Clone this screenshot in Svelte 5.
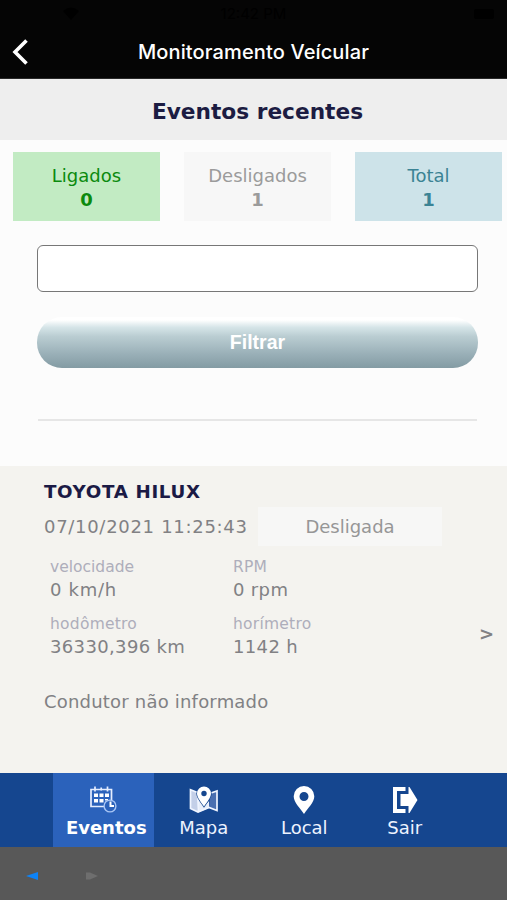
<script lang="ts">
	type Summary = { id: string; label: string; count: number };
	type Reading = { id: string; label: string; value: string };
	type Tab = { id: string; label: string };

	const summaries: Summary[] = [
		{ id: 'on', label: 'Ligados', count: 0 },
		{ id: 'off', label: 'Desligados', count: 1 },
		{ id: 'total', label: 'Total', count: 1 }
	];

	const readings: Reading[] = [
		{ id: 'speed', label: 'velocidade', value: '0 km/h' },
		{ id: 'rpm', label: 'RPM', value: '0 rpm' },
		{ id: 'odometer', label: 'hodômetro', value: '36330,396 km' },
		{ id: 'hours', label: 'horímetro', value: '1142 h' }
	];

	const tabs: Tab[] = [
		{ id: 'eventos', label: 'Eventos' },
		{ id: 'mapa', label: 'Mapa' },
		{ id: 'local', label: 'Local' },
		{ id: 'sair', label: 'Sair' }
	];

	let activeTab = $state('eventos');
	let query = $state('');
</script>

<div class="screen">
	<header class="topbar">
		<div class="status">
			<svg width="18" height="14" viewBox="0 0 18 14" aria-hidden="true">
				<path d="M1 4Q9 -3 17 4L9 13Z" />
			</svg>
			<span>12:42 PM</span>
			<svg width="22" height="10" viewBox="0 0 22 10" aria-hidden="true">
				<rect width="20" height="10" rx="2" />
			</svg>
		</div>
		<div class="topbar__row">
			<button class="back" aria-label="Voltar">
				<svg width="18" height="28" viewBox="0 0 18 28" aria-hidden="true">
					<path d="M15.500 2.500 4 14 15.500 25.500" />
				</svg>
			</button>
			<h1>Monitoramento Veícular</h1>
		</div>
	</header>

	<h2 class="heading">Eventos recentes</h2>

	<section class="summary">
		{#each summaries as item (item.id)}
			<div class="summary__box summary__box--{item.id}">
				<span>{item.label}</span>
				<b>{item.count}</b>
			</div>
		{/each}
	</section>

	<form class="filter">
		<input type="text" aria-label="Filtro" bind:value={query} />
		<button type="button">Filtrar</button>
	</form>

	<article class="vehicle">
		<h3>TOYOTA HILUX</h3>
		<div class="vehicle__state">
			<time>07/10/2021 11:25:43</time>
			<span>Desligada</span>
		</div>
		<div class="vehicle__details">
			<dl>
				{#each readings as reading (reading.id)}
					<div class="reading reading--{reading.id}">
						<dt>{reading.label}</dt>
						<dd>{reading.value}</dd>
					</div>
				{/each}
			</dl>
			<span class="vehicle__more">&gt;</span>
		</div>
		<p class="vehicle__driver">Condutor não informado</p>
	</article>

	<nav class="tabs">
		{#each tabs as tab (tab.id)}
			<button
				class="tab tab--{tab.id}"
				class:tab--active={activeTab === tab.id}
				onclick={() => (activeTab = tab.id)}
			>
				{#if tab.id === 'eventos'}
					<svg width="28" height="28" viewBox="0 0 28 28" aria-hidden="true">
						<path d="M15 20.500H2V3.500h20.500V14" fill="none" stroke="#e4edff" stroke-width="1.700" />
						<path d="M6 .500v5M18.500 .500v5M12.200 1.500v3" stroke="#e4edff" stroke-width="1.700" />
						<path
							d="M5 7.500h4v3.500H5zM10.500 7.500h4v3.500h-4zM16 7.500h4v3.500h-4zM5 13h4v3.500H5zM10.500 13h4v3.500h-4zM16 13h3v1.500h-3z"
							fill="#fff"
						/>
						<circle cx="21" cy="20" r="5.900" fill="#2b62bb" stroke="#a9c6f5" stroke-width="1.400" />
						<path d="M21.500 15.500V20h3.500" fill="none" stroke="#fff" stroke-width="2" />
					</svg>
				{:else if tab.id === 'mapa'}
					<svg width="30" height="28" viewBox="0 0 30 28" aria-hidden="true">
						<path d="M1 3.500 8 6.500V25.500L1 22.500Z" fill="#c3cfe8" />
						<path d="M8 12 15 20 20 15V22L9 26.500Z" fill="#e9effa" />
						<path d="M21 7h2l5-2V24l-8-2Z" fill="#4a6fb0" />
						<path
							d="M8.500 6.500 1.500 3.800V22.500L9 26 20 21.500 28 24.500V5l-6 2M9 8v17"
							fill="none"
							stroke="#f0f5ff"
							stroke-width="1.700"
						/>
						<path
							d="M15 .500a7 7 0 0 0-7 7c0 4 4 8.500 7 13C18 16 22 11.500 22 7.500a7 7 0 0 0-7-7Z"
							fill="#fff"
							stroke="#15468f"
							stroke-width="1.400"
							paint-order="stroke"
						/>
						<circle cx="15" cy="7.500" r="2.700" fill="#15468f" />
					</svg>
				{:else if tab.id === 'local'}
					<svg width="22" height="28" viewBox="0 0 22 28" aria-hidden="true">
						<path
							d="M11 0A10.300 10.300 0 0 0 .700 10.300C.700 16.500 7 22 11 28c4-6 10.300-11.500 10.300-17.700A10.300 10.300 0 0 0 11 0Zm0 6a4.500 4.500 0 1 1 0 9 4.500 4.500 0 0 1 0-9Z"
							fill="#fff"
							fill-rule="evenodd"
						/>
					</svg>
				{:else}
					<svg width="26" height="28" viewBox="0 0 26 28" aria-hidden="true">
						<path d="M13.500 3H3v22h10.500" fill="none" stroke="#fff" stroke-width="4" />
						<path d="M8.500 8h8V1h1L25.500 14 17.500 27h-1v-7h-8Z" fill="#fff" />
					</svg>
				{/if}
				<span>{tab.label}</span>
			</button>
		{/each}
	</nav>

	<footer class="browser">
		<svg width="12" height="8" viewBox="0 0 12 8" aria-hidden="true">
			<path d="M0 4 12 0v8Z" fill="#0d83f7" />
		</svg>
		<svg width="12" height="8" viewBox="0 0 12 8" aria-hidden="true">
			<path d="M0 .500h4L12 4 4 7.500H0Z" fill="#6e6e6e" />
		</svg>
	</footer>
</div>

<style>
	:global(body) {
		margin: 0;
	}

	.screen {
		display: flex;
		flex-direction: column;
		width: 507px;
		height: 900px;
		overflow: hidden;
		background: #fcfcfc;
		color: #818184;
		font-family: 'DejaVu Sans', Verdana, sans-serif;
		font-size: 18px;
		line-height: 24px;
	}

	button {
		padding: 0;
		border: 0;
		background: none;
		color: inherit;
		font: inherit;
	}

	svg {
		display: block;
	}

	h1,
	h2,
	h3,
	p,
	dl,
	dd {
		margin: 0;
	}

	.topbar {
		box-sizing: border-box;
		flex: none;
		height: 79px;
		border-bottom: 1px solid #292929;
		background: #050505;
		color: #fff;
	}

	.status {
		display: grid;
		grid-template-columns: 1fr auto 1fr;
		align-items: center;
		height: 27px;
		padding: 0 11px 0 62px;
		fill: #000;
		color: #000;
		font: 15px/27px Inter, sans-serif;
	}

	.status span {
		margin-left: -51px;
	}

	.status svg:last-child {
		justify-self: end;
	}

	.topbar__row {
		display: grid;
		grid-template-columns: 40px 1fr 40px;
		align-items: center;
		height: 50px;
	}

	.back {
		padding-left: 11px;
	}

	.back path {
		fill: none;
		stroke: #fff;
		stroke-width: 3.6;
	}

	.topbar h1 {
		font: 500 20px/24px Inter, sans-serif;
		letter-spacing: 0.13px;
		text-align: center;
		white-space: nowrap;
	}

	.heading {
		flex: none;
		height: 61px;
		padding-left: 8px;
		background: #eee;
		color: #1c1c42;
		font-size: 21.7px;
		line-height: 65px;
		text-align: center;
	}

	.summary {
		display: grid;
		grid-template-columns: repeat(3, 147px);
		justify-content: space-between;
		padding: 12px 5px 0 13px;
	}

	.summary__box {
		display: flex;
		flex-direction: column;
		box-sizing: border-box;
		height: 69px;
		padding-top: 12px;
		text-align: center;
	}

	.summary__box--on {
		background: #c2ebc3;
		color: #0b8a0e;
	}

	.summary__box--off {
		background: #f7f7f7;
		color: #9b9b9b;
	}

	.summary__box--total {
		background: #cde3e9;
		color: #3b8394;
	}

	.filter {
		display: flex;
		flex: none;
		flex-direction: column;
		height: 177px;
		margin: 24px 29px 0 37px;
	}

	.filter input {
		box-sizing: border-box;
		flex: none;
		width: 441px;
		height: 47px;
		padding: 0 10px;
		border: 1.500px solid #777;
		border-radius: 6px;
		background: #fff;
		font: inherit;
	}

	.filter button {
		flex: none;
		height: 51px;
		margin-top: 25px;
		border-radius: 25px;
		background: linear-gradient(#fff 0 6%, #d6e5e8 20%, #bacdd2 38%, #9ab0b8 72%, #839ba3 100%);
		color: #fff;
		font: bold 19.500px/51px 'Liberation Sans', Arial, sans-serif;
	}

	.filter::after {
		flex: none;
		height: 2px;
		margin: 51px 1px 0;
		background: #e6e6e6;
		content: '';
	}

	.vehicle {
		flex: none;
		box-sizing: border-box;
		height: 307px;
		margin-top: 44px;
		padding: 14px 0 0 44px;
		background: #f4f3ef;
	}

	.vehicle h3 {
		color: #1b1a45;
		font-size: 18.3px;
		letter-spacing: 0.63px;
		line-height: 24px;
	}

	.vehicle__state {
		display: flex;
		align-items: center;
		gap: 11px;
		margin-top: 3px;
	}

	.vehicle__state time {
		width: 203px;
		letter-spacing: 0.7px;
		white-space: nowrap;
	}

	.vehicle__state span {
		width: 184px;
		height: 39px;
		background: #f7f7f6;
		color: #969696;
		line-height: 40px;
		text-align: center;
	}

	.vehicle__details {
		display: grid;
		grid-template-columns: 429px 1fr;
		padding-left: 6px;
		margin-top: 10px;
	}

	.vehicle dl {
		display: grid;
		grid-template-columns: 183px 1fr;
		row-gap: 12px;
	}

	.reading dt {
		color: #aeaebb;
		font-size: 15.500px;
		letter-spacing: 0.25px;
		line-height: 22px;
	}

	.reading--speed dt {
		letter-spacing: 0;
	}

	.reading dd {
		letter-spacing: 0.35px;
		line-height: 23px;
	}

	.reading--speed dd {
		letter-spacing: 0.7px;
	}

	.vehicle__more {
		margin-top: 66px;
		font-size: 18px;
		font-weight: bold;
		line-height: 23px;
	}

	.vehicle__driver {
		margin-top: 32px;
		letter-spacing: 0.2px;
	}

	.tabs {
		display: grid;
		flex: none;
		grid-template-columns: repeat(4, 100.500px);
		height: 74px;
		padding-left: 53px;
		background: #15468f;
		color: #edf3ff;
	}

	.tab {
		display: flex;
		flex-direction: column;
		align-items: center;
		padding-top: 13px;
	}

	.tab span {
		font-size: 18px;
		line-height: 28px;
	}

	.tab--active {
		background: #2b62bb;
		color: #fff;
	}

	.tab--active span {
		font-weight: bold;
		margin-left: 6px;
	}

	.browser {
		display: flex;
		flex: 1;
		gap: 48px;
		padding: 25px 0 0 26px;
		background: #585858;
	}
</style>
